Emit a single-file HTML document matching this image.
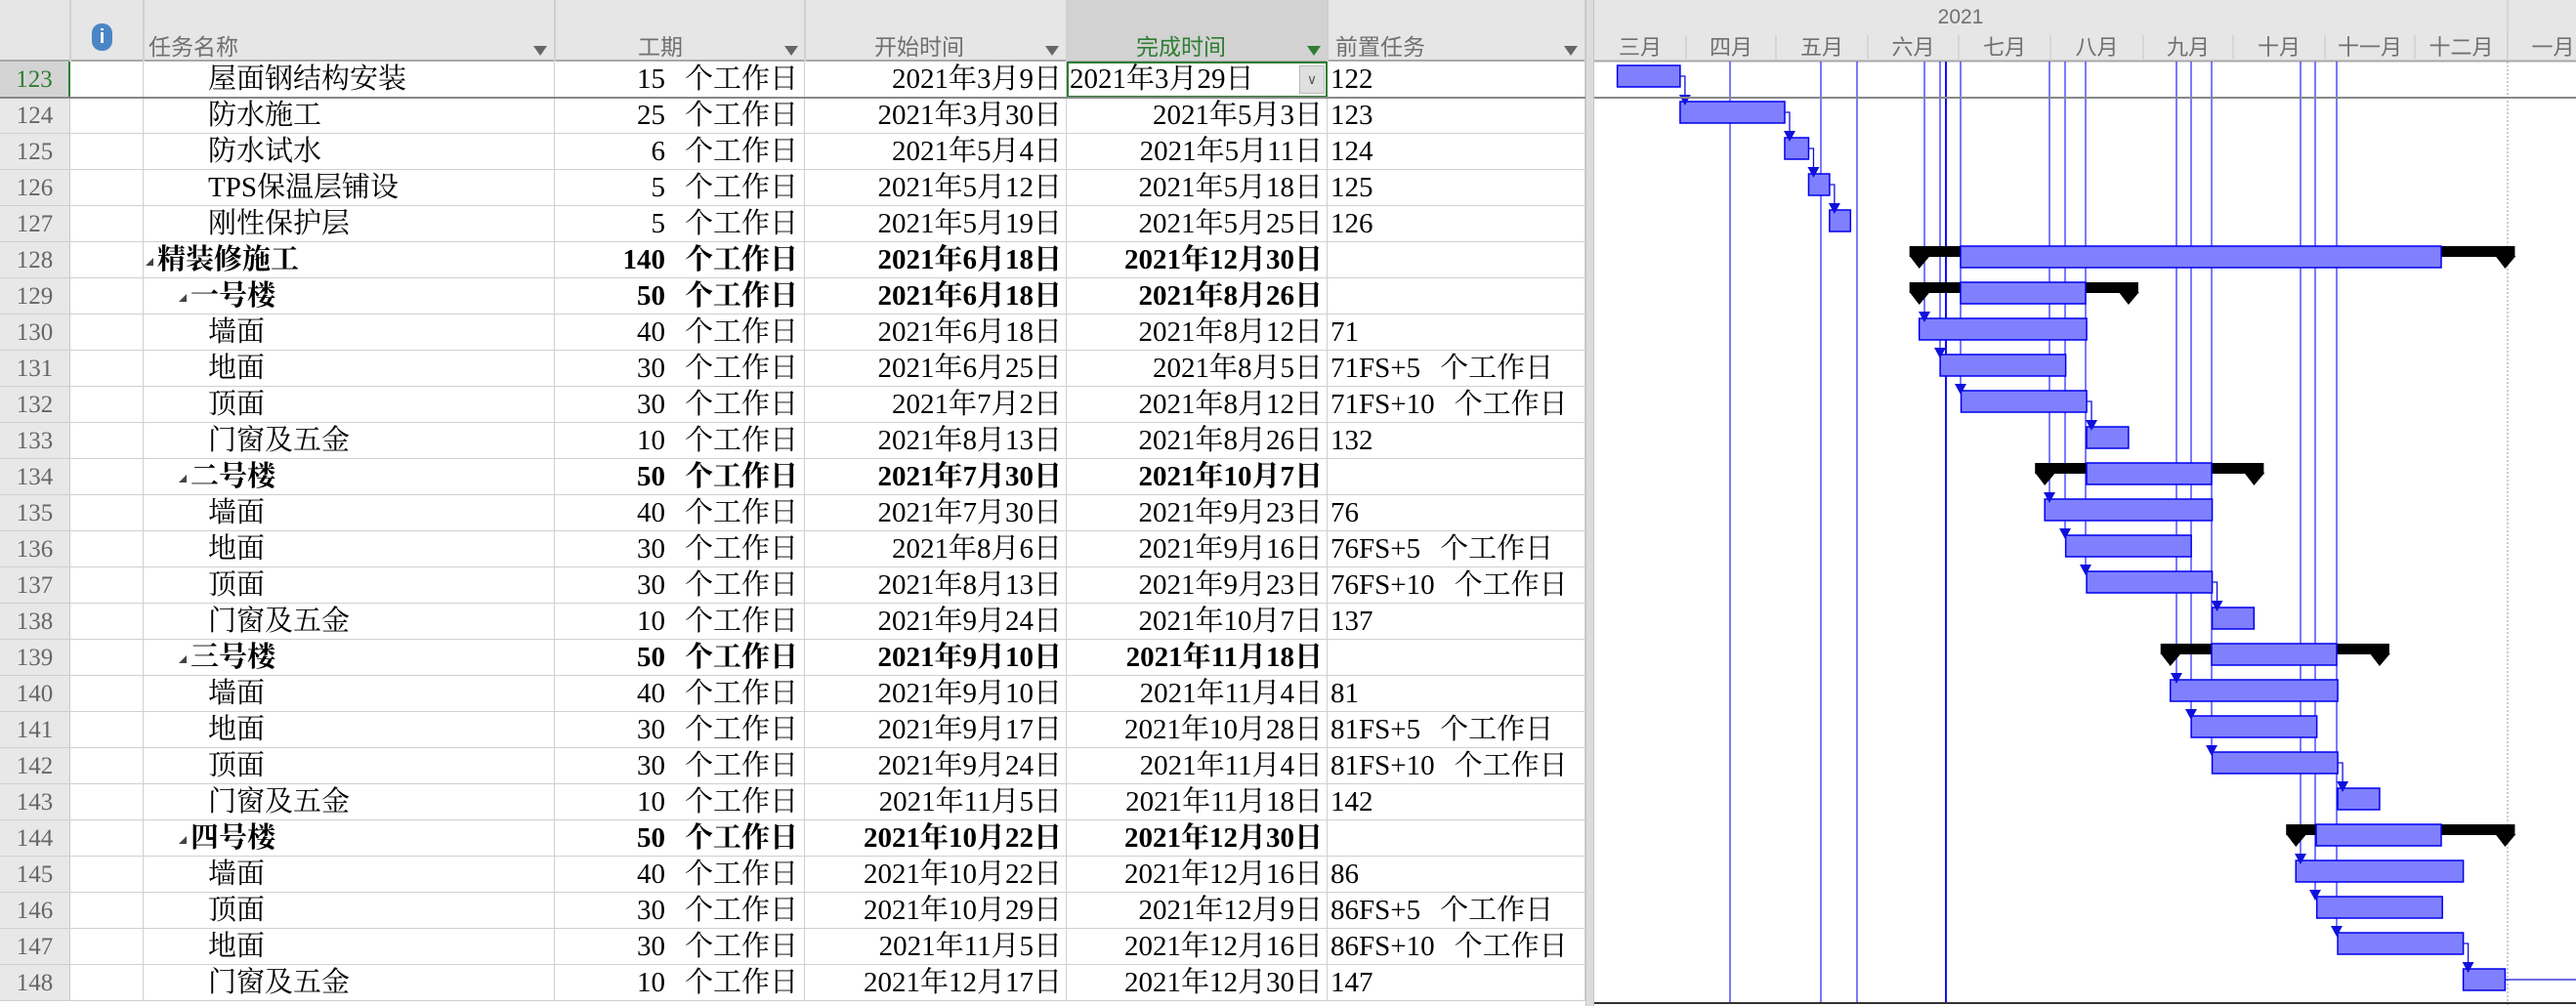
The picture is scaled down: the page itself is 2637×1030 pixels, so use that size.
<!DOCTYPE html>
<html><head><meta charset="utf-8">
<style>
*{margin:0;padding:0;box-sizing:border-box}
body{width:2637px;height:1030px;overflow:hidden;background:#fff;position:relative;font-family:"Liberation Serif","Noto Serif CJK SC",serif}
.a{position:absolute;white-space:nowrap}
.hd{background:#e6e6e6;color:#707070;font-family:"Liberation Sans","Noto Sans CJK SC",sans-serif;font-size:23px}
.c{position:absolute;height:37px;line-height:37px;font-size:29px;color:#000;white-space:nowrap;overflow:hidden;border-right:1.5px solid #d0d0d0;border-bottom:1.5px solid #d0d0d0}
.rn{background:#e8e8e8;color:#666;font-size:25px;text-align:center;border-right:1.5px solid #c8c8c8}
.dd{position:absolute;width:0;height:0;border-left:7px solid transparent;border-right:7px solid transparent;border-top:10px solid #666}
.g{display:inline-block;width:20px}
</style></head><body>
<div id="root"></div>
<script>
const rows=[
[123,'屋面钢结构安装',15,[3,9],[3,29],'122',2],
[124,'防水施工',25,[3,30],[5,3],'123',2],
[125,'防水试水',6,[5,4],[5,11],'124',2],
[126,'TPS保温层铺设',5,[5,12],[5,18],'125',2],
[127,'刚性保护层',5,[5,19],[5,25],'126',2],
[128,'精装修施工',140,[6,18],[12,30],'',0],
[129,'一号楼',50,[6,18],[8,26],'',1],
[130,'墙面',40,[6,18],[8,12],'71',2],
[131,'地面',30,[6,25],[8,5],'71FS+5<span class="g"></span>个工作日',2],
[132,'顶面',30,[7,2],[8,12],'71FS+10<span class="g"></span>个工作日',2],
[133,'门窗及五金',10,[8,13],[8,26],'132',2],
[134,'二号楼',50,[7,30],[10,7],'',1],
[135,'墙面',40,[7,30],[9,23],'76',2],
[136,'地面',30,[8,6],[9,16],'76FS+5<span class="g"></span>个工作日',2],
[137,'顶面',30,[8,13],[9,23],'76FS+10<span class="g"></span>个工作日',2],
[138,'门窗及五金',10,[9,24],[10,7],'137',2],
[139,'三号楼',50,[9,10],[11,18],'',1],
[140,'墙面',40,[9,10],[11,4],'81',2],
[141,'地面',30,[9,17],[10,28],'81FS+5<span class="g"></span>个工作日',2],
[142,'顶面',30,[9,24],[11,4],'81FS+10<span class="g"></span>个工作日',2],
[143,'门窗及五金',10,[11,5],[11,18],'142',2],
[144,'四号楼',50,[10,22],[12,30],'',1],
[145,'墙面',40,[10,22],[12,16],'86',2],
[146,'顶面',30,[10,29],[12,9],'86FS+5<span class="g"></span>个工作日',2],
[147,'地面',30,[11,5],[12,16],'86FS+10<span class="g"></span>个工作日',2],
[148,'门窗及五金',10,[12,17],[12,30],'147',2]];
const cols=[0,72,147,568,824,1092,1359,1623];
let h='';
h+=`<div class="a hd" style="left:0;top:0;width:1632px;height:63px;border-bottom:2px solid #a8a8a8"></div>`;
h+=`<div class="a" style="left:1092px;top:0;width:267px;height:62px;background:#d2d2d2"></div>`;
for(let i=1;i<8;i++)h+=`<div class="a" style="left:${cols[i]-1}px;top:0;width:1.5px;height:63px;background:#d0d0d0"></div>`;
h+=`<div class="a" style="left:94px;top:24px;width:21px;height:28px;border-radius:10px;background:#4a86c5;color:#fff;font:bold 20px 'Liberation Sans';text-align:center;line-height:28px">i</div>`;
const H=[[152,'任务名称',553],[653,'工期',810],[895,'开始时间',1077],[1163,'完成时间',1345],[1367,'前置任务',1608]];
H.forEach(([x,t,d],i)=>{h+=`<div class="a hd" style="left:${x}px;top:29px;background:none;${i==3?'color:#2e7d32':''}">${t}</div><div class="dd" style="left:${d-7}px;top:47px;${i==3?'border-top-color:#2e7d32':''}"></div>`});
const md=(m,d)=>m+'月'+d+'日';
rows.forEach((r,k)=>{
 const y=63+k*37, b=r[6]<2?'font-weight:bold;':'';
 const sel=k==0;
 h+=`<div class="c rn" style="left:0;top:${y}px;width:72px;${sel?'background:#d4d4d4;color:#2e7d32;border-right:2px solid #2e7d32':''}">${r[0]}</div>`;
 h+=`<div class="c" style="left:72px;top:${y}px;width:75px"></div>`;
 const ind=[161,195,213][r[6]];
 const tri=r[6]<2?`<span style="position:absolute;left:${ind-12-147}px;top:16px;width:0;height:0;border-left:8px solid transparent;border-bottom:8px solid #444"></span>`:'';
 h+=`<div class="c" style="left:147px;top:${y}px;width:421px;${b}">${tri}<span style="position:absolute;left:${ind-147}px">${r[1]}</span></div>`;
 h+=`<div class="c" style="left:568px;top:${y}px;width:256px;text-align:right;padding-right:6px;${b}">${r[2]}<span class="g"></span>个工作日</div>`;
 h+=`<div class="c" style="left:824px;top:${y}px;width:268px;text-align:right;padding-right:4px;${b}">2021年${md(...r[3])}</div>`;
 if(sel) h+=`<div class="c" style="left:1092px;top:${y}px;width:267px;border:2.5px solid #2e7d32;line-height:33px;padding-left:1px">2021年${md(...r[4])}<div class="a" style="left:236px;top:2px;width:26px;height:29px;background:#e0e0e0;border:1px solid #bbb;font:14px 'Liberation Sans';color:#555;text-align:center;line-height:27px">&#8744;</div></div>`;
 else h+=`<div class="c" style="left:1092px;top:${y}px;width:267px;text-align:right;padding-right:4px;${b}">2021年${md(...r[4])}</div>`;
 h+=`<div class="c" style="left:1359px;top:${y}px;width:264px;padding-left:3px">${r[5]}</div>`;
});
h+=`<div class="a" style="left:0;top:99px;width:2637px;height:2px;background:#888"></div>`;
h+=`<div class="a" style="left:1623px;top:0;width:9px;height:1030px;background:#dcdcdc;border-left:1px solid #c4c4c4;border-right:1px solid #c4c4c4"></div>`;
const G=1632;
const X=(m,d)=>1726+(new Date(2021,m-1,d)-new Date(2021,3,1))/864e5*3.06-G;
let s=`<svg class="a" style="left:${G}px;top:0" width="1005" height="1030" xmlns="http://www.w3.org/2000/svg">`;
s+=`<rect x="0" y="0" width="1005" height="63" fill="#e6e6e6"/><line x1="0" y1="62.5" x2="1005" y2="62.5" stroke="#a8a8a8" stroke-width="2"/>`;
s+=`<text x="375" y="24" font-family="Liberation Sans" font-size="21" fill="#707070" text-anchor="middle">2021</text>`;
const mb=[1632,1726,1818,1912,2005,2099,2194,2286,2380,2472,2567,2660];
const mn=['三月','四月','五月','六月','七月','八月','九月','十月','十一月','十二月','一月'];
for(let i=0;i<11;i++){s+=`<text x="${(mb[i]+mb[i+1])/2-G}" y="56" font-family="Liberation Sans,Noto Sans CJK SC" font-size="22" fill="#707070" text-anchor="middle">${mn[i]}</text>`;
 if(i>0)s+=`<line x1="${mb[i]-G}" y1="36" x2="${mb[i]-G}" y2="62" stroke="#d0d0d0" stroke-width="1.5"/>`;}
s+=`<line x1="${2567-G}" y1="0" x2="${2567-G}" y2="62" stroke="#d0d0d0" stroke-width="1.5"/>`;
s+=`<line x1="${2567-G}" y1="63" x2="${2567-G}" y2="1030" stroke="#999" stroke-width="1" stroke-dasharray="2,2"/>`;
s+=`<line x1="0" y1="1027" x2="1005" y2="1027" stroke="#333" stroke-width="2"/>`;
[1771,1864,1901].forEach(x=>s+=`<line x1="${x-G}" y1="63" x2="${x-G}" y2="1026" stroke="#2222ff" stroke-width="1.2"/>`);
s+=`<line x1="${1992-G}" y1="63" x2="${1992-G}" y2="1026" stroke="#1111ee" stroke-width="2"/>`;
const bar=(x1,x2,y)=>`<rect x="${x1}" y="${y+4}" width="${x2-x1}" height="22" fill="#8080ff" stroke="#0000ee" stroke-width="1.5"/>`;
const arr=(x,y)=>`<path d="M${x-6} ${y-7}L${x+6} ${y-7}L${x} ${y+4}Z" fill="#1010dd"/>`;
const groups={130:[1970,1986,2007],135:[2098,2114,2135],140:[2228,2243,2264],145:[2355,2370,2392]};
let out='';
rows.forEach((r,k)=>{
 const y=63+k*37;
 const x1=X(...r[3]), x2=X(r[4][0],r[4][1]+1);
 if(r[6]<2){
  out+=`<rect x="${x1-10}" y="${y+4}" width="${x2-x1+20}" height="11" fill="#000"/>`;
  out+=`<path d="M${x1-10} ${y+14}L${x1+11} ${y+14}L${x1} ${y+27}Z M${x2-10} ${y+14}L${x2+11} ${y+14}L${x2} ${y+27}Z" fill="#000"/>`;
  const bl={128:[2007,2499],129:[2007,2135],134:[2136,2264],139:[2264,2392],144:[2371,2499]}[r[0]];
  out+=bar(bl[0]-G,bl[1]-G,y);
 } else out+=bar(x1,x2,y);
});
for(const st in groups){const k0=st-123;groups[st].forEach((x,i)=>{const y=63+(k0+i)*37+4;s+=`<line x1="${x-G}" y1="63" x2="${x-G}" y2="${y}" stroke="#2222ff" stroke-width="1.2"/>`;out+=arr(x-G,y);});}
const seq=[[123,124],[124,125],[125,126],[126,127],[132,133],[137,138],[142,143],[147,148]];
seq.forEach(([a,b])=>{const ra=rows[a-123],rb=rows[b-123];const ya=63+(a-123)*37+15,yb=63+(b-123)*37+4;const xe=X(ra[4][0],ra[4][1]+1);const xn=X(...rb[3])+5;
 out+=`<path d="M${xe} ${ya}L${xn} ${ya}L${xn} ${yb-6}" fill="none" stroke="#1010dd" stroke-width="1.3"/>`+arr(xn,yb);});
out+=`<line x1="${X(12,31)}" y1="${63+25*37+15}" x2="1005" y2="${63+25*37+15}" stroke="#1010dd" stroke-width="1.3"/>`;
s+=out+`<line x1="0" y1="100" x2="1005" y2="100" stroke="#888" stroke-width="2"/></svg>`;
h+=s;
document.getElementById('root').innerHTML=h;
</script>
</body></html>
